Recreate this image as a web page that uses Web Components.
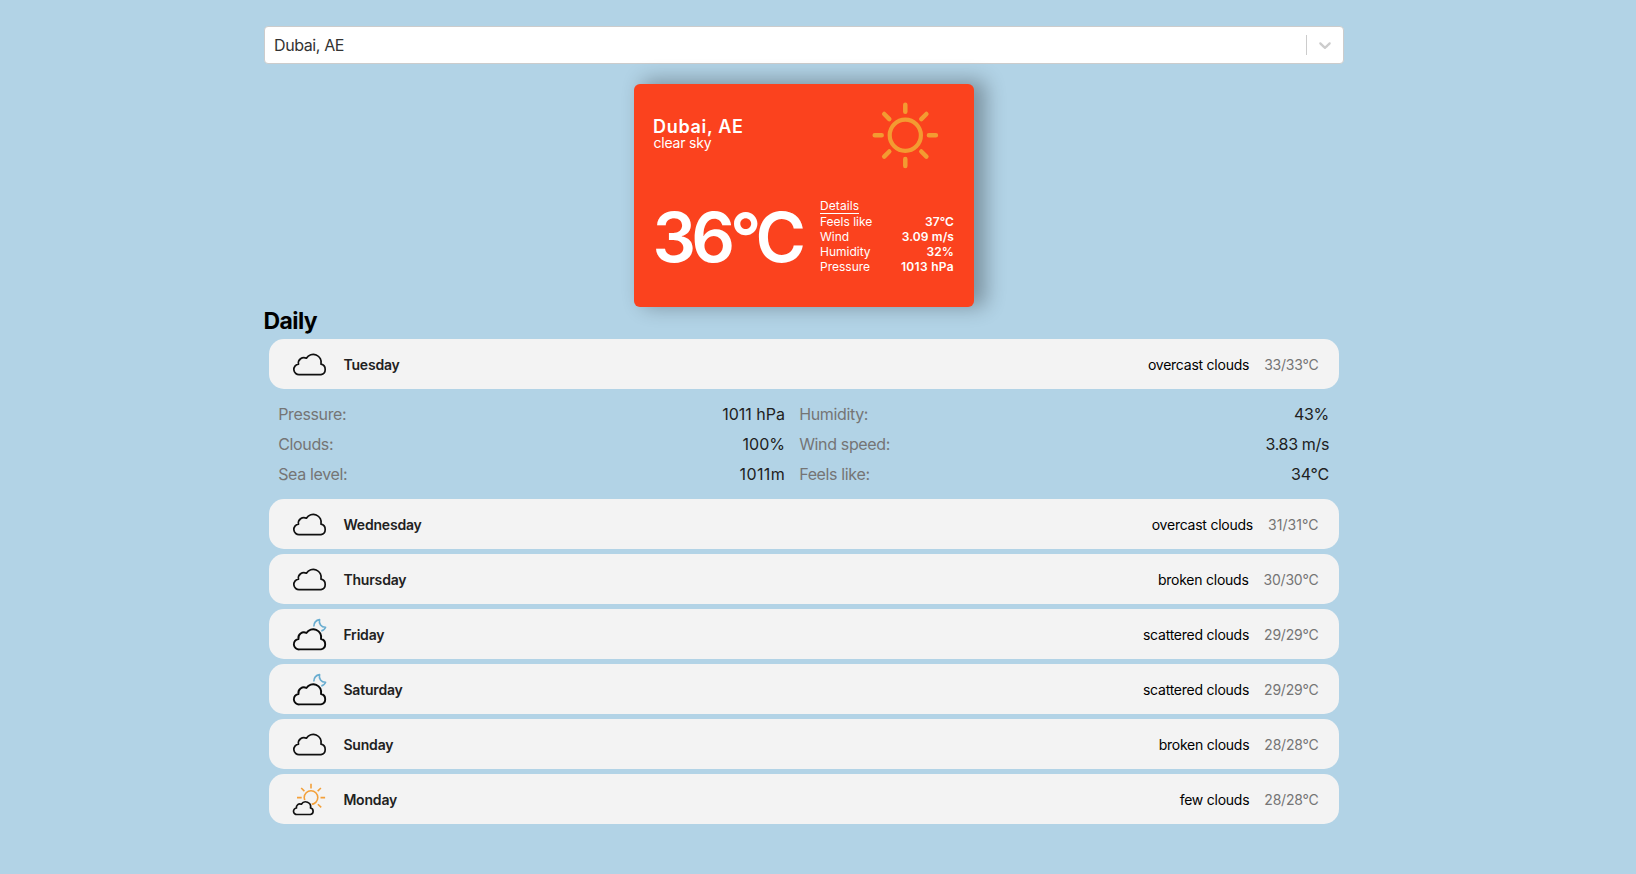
<!DOCTYPE html>
<html lang="en">
<head>
<meta charset="utf-8">
<title>Weather</title>
<style>
  body {
    margin: 0;
    min-height: 100vh;
    background: #b2d3e6;
    font-family: Inter, "Liberation Sans", sans-serif;
    -webkit-font-smoothing: antialiased;
  }
</style>
</head>
<body>
<weather-app></weather-app>
<script>
const CLOUD = 'M9.8 30.7A5.2 5.2 0 0 1 8.7 20.3A5.5 5.5 0 0 1 16.6 14.3A8 8 0 0 1 31.2 20.3A5.2 5.3 0 0 1 31.2 30.7Z';
const ICONS = {
  clear: `<g fill="none" stroke="#f39b31" stroke-width="4.5" stroke-linecap="round">
    <circle cx="51.3" cy="51.3" r="15.6" stroke-width="4.2"/>
    <path d="M51.3 20.7v7M51.3 74.9v7M20.7 51.3h7M74.9 51.3h7M30.2 30l5.1 5.1M72.4 30l-5.1 5.1M30.2 72.6l5.1-5.1M72.4 72.6l-5.1-5.1"/></g>`,
  cloud: `<path d="${CLOUD}" transform="translate(.8 -.1)" fill="none" stroke="#111" stroke-width="1.7" stroke-linejoin="round"/>`,
  night: `<path d="M24.8 12.4C24.9 8.8 27 6.2 30.6 5.6C29.5 9.8 32.2 13.4 36.6 13.3C35.7 15.4 34.3 16.6 32.3 16.9" fill="none" stroke="#69add0" stroke-width="1.6" stroke-linejoin="round"/>
    <path d="${CLOUD}" transform="translate(.8 4.7)" fill="none" stroke="#0a0a0a" stroke-width="1.9" stroke-linejoin="round"/>`,
  few: `<g fill="none" stroke="#f3a03a" stroke-width="1.6">
    <circle cx="22" cy="18.6" r="6.8"/>
    <path d="M22 4.8v4.6M8 18.6h4.7M31.5 18.6h4.6M12.2 9l3.2 3.1M31.9 9l-3.2 3.1M28.9 25.2l3.3 3.2"/></g>
    <path d="${CLOUD}" transform="translate(2 16.3) scale(.625)" fill="#f3f3f3" stroke="#f3f3f3" stroke-width="5.5"/>
    <path d="${CLOUD}" transform="translate(2 16.3) scale(.625)" fill="#f3f3f3" stroke="#111" stroke-width="2.7" stroke-linejoin="round"/>`
};

function define(name, render) {
  customElements.define(name, class extends HTMLElement {
    connectedCallback() {
      if (this.shadowRoot) return;
      const t = document.createElement('template');
      t.innerHTML = render(this);
      this.attachShadow({ mode: 'open' }).append(t.content.cloneNode(true));
    }
  });
}

define('weather-icon', el => {
  const size = el.getAttribute('size') || 40;
  return `<style>:host{display:block;flex:none}svg{display:block}</style>
    <svg width="${size}" height="${size}" viewBox="0 0 ${size} ${size}">${ICONS[el.getAttribute('name')]}</svg>`;
});

define('city-select', () => `
  <style>
    :host{display:flex;align-items:center;box-sizing:border-box;height:38px;background:#fff;border:1px solid #ccc;border-radius:4px;color:#333;font-size:16px}
    .value{flex:1;padding:0 9px;line-height:20px;letter-spacing:-.4px}
    .sep{width:1px;align-self:stretch;margin:8px 0;background:#ccc}
    .arrow{display:flex;padding:8px;color:#ccc}
  </style>
  <div class="value"><slot></slot></div>
  <span class="sep"></span>
  <div class="arrow"><svg width="20" height="20" viewBox="0 0 20 20" fill="currentColor"><path d="M4.516 7.548c0.436-0.446 1.043-0.481 1.576 0l3.908 3.747 3.908-3.747c0.533-0.481 1.141-0.446 1.574 0 0.436 0.445 0.408 1.197 0 1.615-0.406 0.418-4.695 4.502-4.695 4.502-0.217 0.223-0.502 0.335-0.787 0.335s-0.57-0.112-0.789-0.335c0 0-4.287-4.084-4.695-4.502s-0.436-1.17 0-1.615z"/></svg></div>`);

define('detail-row', el => `
  <style>
    :host{display:flex;justify-content:space-between;font-size:12px;line-height:15px}
    b{font-weight:600;letter-spacing:var(--track,.1px)}
  </style>
  <span>${el.getAttribute('label')}</span><b><slot></slot></b>`);

define('current-weather', () => `
  <style>
    :host{display:block;width:300px;height:203px;margin:20px auto 0;padding:0 20px 20px;border-radius:6px;color:#fff;background:#fb421e;box-shadow:10px -2px 20px 2px rgb(0 0 0 / 30%)}
    .top,.bottom{display:flex;justify-content:space-between;align-items:center}
    p{margin:0}
    .city{margin-left:-1px;font-weight:600;font-size:18px;line-height:18px;letter-spacing:.68px}
    .desc{margin-left:-.6px;font-size:14px;line-height:14px;letter-spacing:-.2px}
    .temp{flex:none;width:147.5px;margin:12px 0 8px -1.5px;font-weight:600;font-size:68.5px;line-height:83px;letter-spacing:-4.9px;white-space:nowrap}
    .details{flex:1;padding-left:20px}
    .head{display:flex}
    .head span{font-size:12px;line-height:15px;border-bottom:1px solid #fff;letter-spacing:.1px}
  </style>
  <div class="top">
    <div><p class="city">Dubai, AE</p><p class="desc">clear sky</p></div>
    <weather-icon name="clear" size="100"></weather-icon>
  </div>
  <div class="bottom">
    <p class="temp">36°C</p>
    <div class="details">
      <div class="head"><span>Details</span></div>
      <detail-row label="Feels like">37°C</detail-row>
      <detail-row label="Wind">3.09 m/s</detail-row>
      <detail-row label="Humidity">32%</detail-row>
      <detail-row label="Pressure" style="--track:.3px">1013 hPa</detail-row>
    </div>
  </div>`);

define('day-row', el => `
  <style>
    :host{display:flex;align-items:center;height:40px;margin:5px;padding:5px 20px;border-radius:15px;background:#f3f3f3;font-size:14px}
    .day{flex:1;margin-left:14.4px;color:#212121;font-weight:600;letter-spacing:-.18px}
    .desc{margin-right:15px;color:#000;letter-spacing:-.24px}
    .range{margin-right:.5px;color:#757575;letter-spacing:var(--track,-.22px)}
  </style>
  <weather-icon name="${el.getAttribute('icon')}"></weather-icon>
  <span class="day">${el.getAttribute('day')}</span>
  <span class="desc">${el.getAttribute('desc')}</span>
  <span class="range">${el.getAttribute('range')}</span>`);

define('stat-item', el => `
  <style>
    :host{display:flex;align-items:center;justify-content:space-between;height:30px;font-size:16px;color:#212121}
    span{margin-left:-.8px;color:#757575;letter-spacing:-.36px}
    div{letter-spacing:var(--track,0)}
  </style>
  <span>${el.getAttribute('label')}</span><div><slot></slot></div>`);

define('day-details', () => `
  <style>:host{display:grid;grid-template-columns:506px 1fr;column-gap:15px;padding:5px 15px}</style>
  <slot></slot>`);

define('weather-app', () => `
  <style>
    :host{display:block;width:1080px;padding:26px 0 0 264px}
    h2{margin:0 0 0 -.5px;padding-top:1px;font-size:23px;line-height:26px;font-weight:700;color:#000;letter-spacing:-.6px}
    .list{display:flex;flex-direction:column}
    day-row + day-row{margin-top:0}
  </style>
  <city-select>Dubai, AE</city-select>
  <current-weather></current-weather>
  <h2>Daily</h2>
  <div class="list">
    <day-row icon="cloud" day="Tuesday" desc="overcast clouds" range="33/33°C"></day-row>
    <day-details>
      <stat-item label="Pressure:">1011 hPa</stat-item>
      <stat-item label="Humidity:" style="--track:-.3px">43%</stat-item>
      <stat-item label="Clouds:">100%</stat-item>
      <stat-item label="Wind speed:" style="--track:-.35px">3.83 m/s</stat-item>
      <stat-item label="Sea level:" style="--track:.35px">1011m</stat-item>
      <stat-item label="Feels like:" style="--track:-.2px">34°C</stat-item>
    </day-details>
    <day-row icon="cloud" day="Wednesday" desc="overcast clouds" range="31/31°C" style="--track:.05px"></day-row>
    <day-row icon="cloud" day="Thursday" desc="broken clouds" range="30/30°C"></day-row>
    <day-row icon="night" day="Friday" desc="scattered clouds" range="29/29°C"></day-row>
    <day-row icon="night" day="Saturday" desc="scattered clouds" range="29/29°C"></day-row>
    <day-row icon="cloud" day="Sunday" desc="broken clouds" range="28/28°C"></day-row>
    <day-row icon="few" day="Monday" desc="few clouds" range="28/28°C"></day-row>
  </div>`);
</script>
</body>
</html>
